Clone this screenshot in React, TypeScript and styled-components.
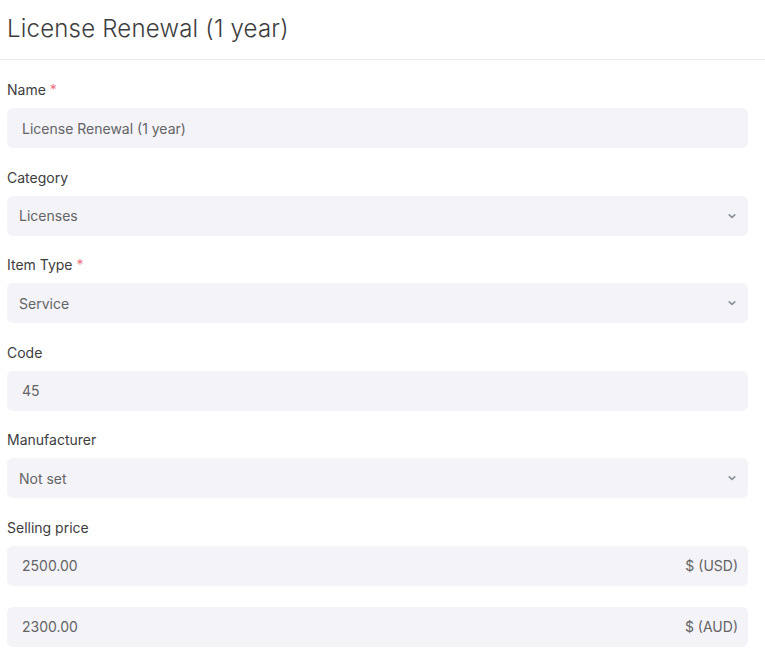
import React from 'react';
import styled, { createGlobalStyle } from 'styled-components';

const GlobalStyle = createGlobalStyle`
  html, body {
    margin: 0;
    padding: 0;
    background: #ffffff;
    font-family: Inter, "Noto Sans", sans-serif;
  }
`;

interface Field {
  label: string;
  required?: boolean;
  kind: 'text' | 'select' | 'price';
  values: { value: string; suffix?: string }[];
}

const FIELDS: Field[] = [
  { label: 'Name', required: true, kind: 'text', values: [{ value: 'License Renewal (1 year)' }] },
  { label: 'Category', kind: 'select', values: [{ value: 'Licenses' }] },
  { label: 'Item Type', required: true, kind: 'select', values: [{ value: 'Service' }] },
  { label: 'Code', kind: 'text', values: [{ value: '45' }] },
  { label: 'Manufacturer', kind: 'select', values: [{ value: 'Not set' }] },
  {
    label: 'Selling price',
    kind: 'price',
    values: [
      { value: '2500.00', suffix: '$ (USD)' },
      { value: '2300.00', suffix: '$ (AUD)' },
    ],
  },
];

const Page = styled.div`
  width: 765px;
`;

const Header = styled.div`
  height: 60px;
  border-bottom: 1px solid #ebebeb;
  display: flex;
  align-items: center;
  padding: 0 7px;
  box-sizing: border-box;
`;

const Title = styled.h1`
  margin: 0 0 3px;
  font-size: 24px;
  font-weight: 300;
  color: #3d3d3d;
  letter-spacing: 0.2px;
`;

const Form = styled.div`
  padding: 21px 17px 0 7px;
  display: flex;
  flex-direction: column;
  gap: 20.5px;
`;

const Group = styled.div`
  display: flex;
  flex-direction: column;
  gap: 21px;
`;

const FieldBox = styled.div`
  display: flex;
  flex-direction: column;
  gap: 9px;
`;

const Label = styled.label`
  font-size: 14px;
  line-height: 18px;
  font-weight: 400;
  color: #3d3d3d;
`;

const Star = styled.span`
  color: #ea7384;
  margin-left: 4px;
`;

const Input = styled.div<{ $pad: number }>`
  height: 40px;
  border-radius: 6px;
  background: #f3f3f8;
  display: flex;
  align-items: center;
  justify-content: space-between;
  padding: 0 10px 0 ${({ $pad }) => $pad}px;
  font-size: 14px;
  color: #646464;
`;

const Suffix = styled.span`
  color: #646464;
`;

const Chevron = () => (
  <svg width="12" height="10" viewBox="0 0 12 10" fill="none">
    <path d="M3.2 3.8 L6 6.4 L8.8 3.8" stroke="#8a8f99" strokeWidth="1.6" strokeLinecap="round" strokeLinejoin="round" />
  </svg>
);

export default function App() {
  return (
    <Page>
      <GlobalStyle />
      <Header>
        <Title>License Renewal (1 year)</Title>
      </Header>
      <Form>
        {FIELDS.map((f) => (
          <FieldBox key={f.label}>
            <Label>
              {f.label}
              {f.required && <Star>*</Star>}
            </Label>
            <Group>
              {f.values.map((v) => (
                <Input key={v.value} $pad={f.kind === 'select' ? 12 : 15}>
                  <span>{v.value}</span>
                  {f.kind === 'select' && <Chevron />}
                  {v.suffix && <Suffix>{v.suffix}</Suffix>}
                </Input>
              ))}
            </Group>
          </FieldBox>
        ))}
      </Form>
    </Page>
  );
}
